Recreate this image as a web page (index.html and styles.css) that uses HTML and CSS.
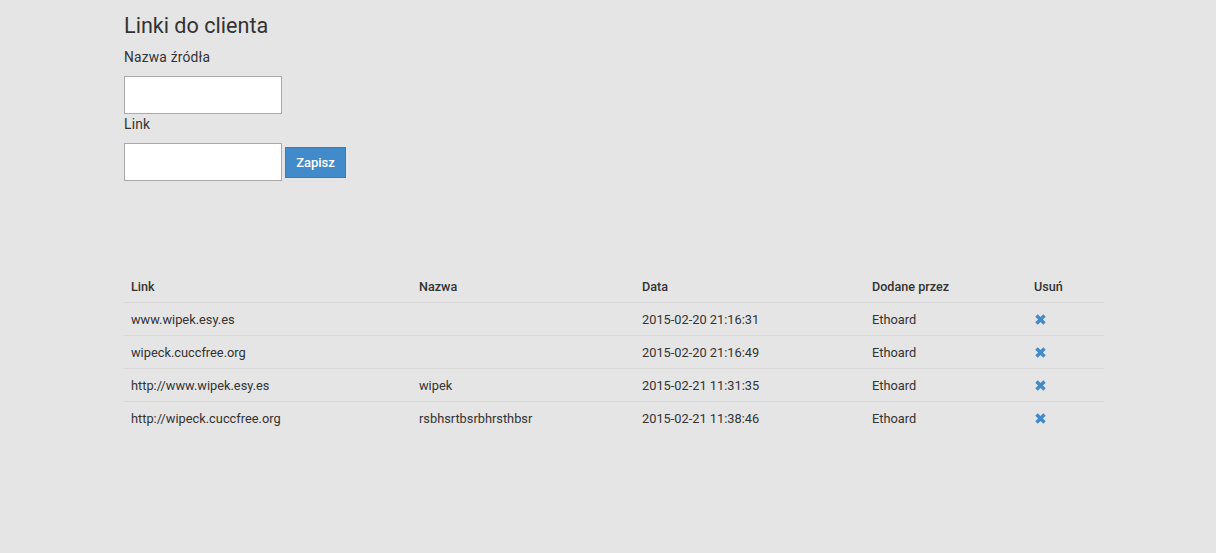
FILE: index.html
```html
<!DOCTYPE html>
<html lang="pl">

<head>
    <meta charset="UTF-8">
    <title>Linki do clienta</title>
    <link rel="stylesheet" href="styles.css">
</head>

<body>
    <div class="container">
        <h3 class="title">Linki do clienta</h3>
        <form class="link-form">
            <label class="field-label">Nazwa źródła</label>
            <div class="field-row">
                <input type="text" class="field-input" name="nazwa">
            </div>
            <label class="field-label">Link</label>
            <div class="field-row">
                <input type="text" class="field-input" name="link">
                <button type="button" class="btn-save">Zapisz</button>
            </div>
        </form>

        <table class="links">
            <thead>
                <tr>
                    <th class="col-link">Link</th>
                    <th class="col-name">Nazwa</th>
                    <th class="col-date">Data</th>
                    <th class="col-user">Dodane przez</th>
                    <th class="col-del">Usuń</th>
                </tr>
            </thead>
            <tbody>
                <tr>
                    <td>www.wipek.esy.es</td>
                    <td></td>
                    <td>2015-02-20 21:16:31</td>
                    <td>Ethoard</td>
                    <td><svg class="del" viewBox="0 0 12 12"><path d="M1.2 3.4 3.4 1.2 6 3.8 8.6 1.2 10.8 3.4 8.2 6 10.8 8.6 8.6 10.8 6 8.2 3.4 10.8 1.2 8.6 3.8 6Z"/></svg></td>
                </tr>
                <tr>
                    <td>wipeck.cuccfree.org</td>
                    <td></td>
                    <td>2015-02-20 21:16:49</td>
                    <td>Ethoard</td>
                    <td><svg class="del" viewBox="0 0 12 12"><path d="M1.2 3.4 3.4 1.2 6 3.8 8.6 1.2 10.8 3.4 8.2 6 10.8 8.6 8.6 10.8 6 8.2 3.4 10.8 1.2 8.6 3.8 6Z"/></svg></td>
                </tr>
                <tr>
                    <td>http://www.wipek.esy.es</td>
                    <td>wipek</td>
                    <td>2015-02-21 11:31:35</td>
                    <td>Ethoard</td>
                    <td><svg class="del" viewBox="0 0 12 12"><path d="M1.2 3.4 3.4 1.2 6 3.8 8.6 1.2 10.8 3.4 8.2 6 10.8 8.6 8.6 10.8 6 8.2 3.4 10.8 1.2 8.6 3.8 6Z"/></svg></td>
                </tr>
                <tr>
                    <td>http://wipeck.cuccfree.org</td>
                    <td>rsbhsrtbsrbhrsthbsr</td>
                    <td>2015-02-21 11:38:46</td>
                    <td>Ethoard</td>
                    <td><svg class="del" viewBox="0 0 12 12"><path d="M1.2 3.4 3.4 1.2 6 3.8 8.6 1.2 10.8 3.4 8.2 6 10.8 8.6 8.6 10.8 6 8.2 3.4 10.8 1.2 8.6 3.8 6Z"/></svg></td>
                </tr>
            </tbody>
        </table>
    </div>
</body>

</html>
```

FILE: styles.css
```css
body {
    margin: 0;
    background-color: #e5e5e5;
    font-family: Roboto, "Liberation Sans", sans-serif;
    font-size: 12.8px;
    color: #333;
}

.container {
    width: 980px;
    padding: 13px 0 0 124px;
}

.title {
    margin: 0 0 10px;
    font-size: 21.6px;
    font-weight: 400;
    line-height: 26px;
    color: #333;
}

.link-form {
    display: flex;
    flex-direction: column;
}

.field-label {
    font-size: 13.8px;
    line-height: 16px;
    letter-spacing: 0.2px;
    margin-bottom: 11px;
}

.field-row {
    display: flex;
    align-items: center;
    gap: 3px;
    margin-bottom: 2px;
}

.field-input {
    width: 158px;
    height: 38px;
    box-sizing: border-box;
    border: 1px solid #a9a9a9;
    background-color: #fff;
    margin: 0;
}

.btn-save {
    width: 61px;
    height: 31px;
    box-sizing: border-box;
    border: 1px solid #357ebd;
    background-color: #428bca;
    color: #fff;
    font-family: Roboto, "Liberation Sans", sans-serif;
    font-size: 13px;
    font-weight: 500;
    padding: 0;
}

.links {
    width: 980px;
    border-collapse: collapse;
    margin-top: 87px;
}

.links th,
.links td {
    text-align: left;
    padding: 0 7px;
    height: 32px;
    vertical-align: middle;
}

.links th {
    font-weight: 500;
    font-size: 12.6px;
    height: 32px;
    border-bottom: 1px solid #d8d8d8;
}

.links tbody tr + tr td {
    border-top: 1px solid #d8d8d8;
}

.col-link { width: 274px; }
.col-name { width: 209px; }
.col-date { width: 216px; }
.col-user { width: 148px; }

.del {
    display: block;
    width: 13px;
    height: 13px;
    fill: #428bca;
}
```
